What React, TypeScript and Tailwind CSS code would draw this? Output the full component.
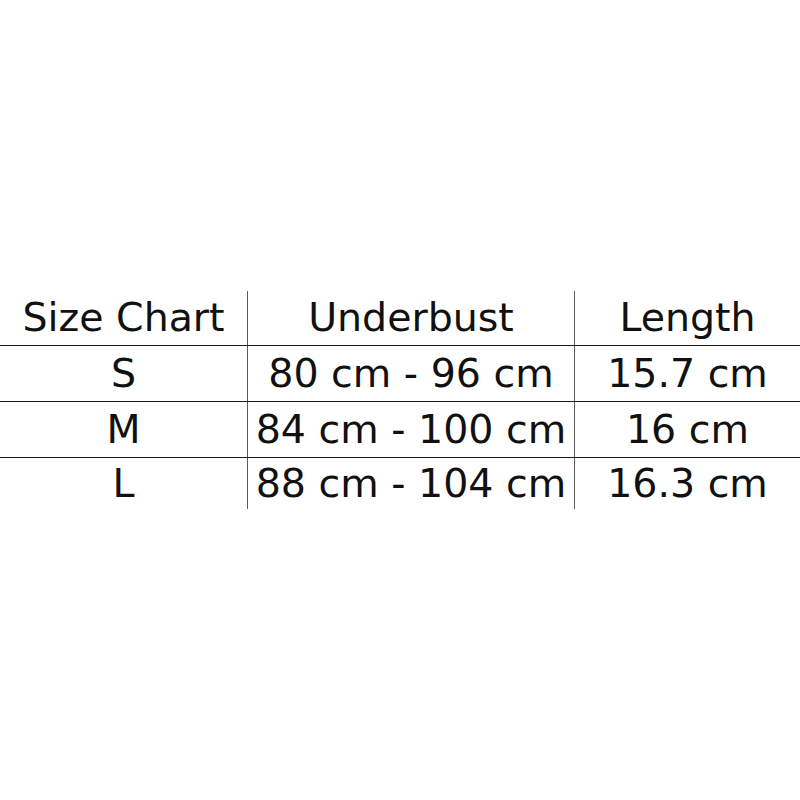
const rows = [
  { size: "S", underbust: "80 cm - 96 cm", length: "15.7 cm" },
  { size: "M", underbust: "84 cm - 100 cm", length: "16 cm" },
  { size: "L", underbust: "88 cm - 104 cm", length: "16.3 cm" },
];

function Row({ cells, top, h }: { cells: string[]; top: boolean; h: string }) {
  return (
    <div className={`grid grid-cols-[247px_327px_226px] ${top ? "border-t border-[#1a1a1a]" : ""}`}>
      {cells.map((c, i) => (
        <div
          key={i}
          className={`${h} flex items-center justify-center text-[39.5px] leading-none text-[#111] ${
            i > 0 ? "border-l-[1.5px] border-[#5a5a5a]" : ""
          }`}
        >
          {c}
        </div>
      ))}
    </div>
  );
}

export default function App() {
  return (
    <div
      className="w-[800px] h-[800px] bg-white pt-[291px]"
      style={{ fontFamily: '"DejaVu Sans", sans-serif' }}
    >
      <Row cells={["Size Chart", "Underbust", "Length"]} top={false} h="h-[54px]" />
      {rows.map((r, i) => (
        <Row key={r.size} cells={[r.size, r.underbust, r.length]} top h={i === 2 ? "h-[51px]" : "h-[55px]"} />
      ))}
    </div>
  );
}
